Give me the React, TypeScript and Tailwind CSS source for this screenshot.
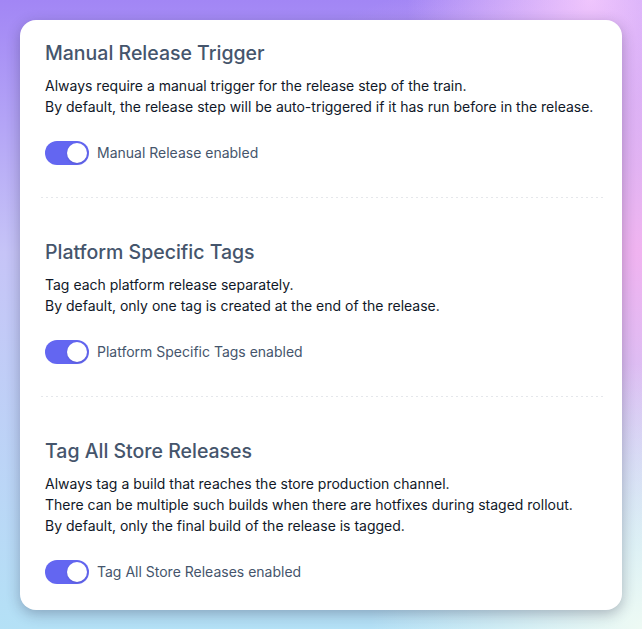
import { useState } from 'react';

type Setting = {
  id: string;
  title: string;
  lines: string[];
  label: string;
};

const SETTINGS: Setting[] = [
  {
    id: 'manual',
    title: 'Manual Release Trigger',
    lines: [
      'Always require a manual trigger for the release step of the train.',
      'By default, the release step will be auto-triggered if it has run before in the release.',
    ],
    label: 'Manual Release enabled',
  },
  {
    id: 'platform',
    title: 'Platform Specific Tags',
    lines: ['Tag each platform release separately.', 'By default, only one tag is created at the end of the release.'],
    label: 'Platform Specific Tags enabled',
  },
  {
    id: 'store',
    title: 'Tag All Store Releases',
    lines: [
      'Always tag a build that reaches the store production channel.',
      'There can be multiple such builds when there are hotfixes during staged rollout.',
      'By default, only the final build of the release is tagged.',
    ],
    label: 'Tag All Store Releases enabled',
  },
];

function Toggle({ on, onChange }: { on: boolean; onChange: () => void }) {
  return (
    <button
      type="button"
      onClick={onChange}
      className={`relative inline-flex h-6 w-11 shrink-0 rounded-full border-2 border-transparent transition-colors ${
        on ? 'bg-[#6366f1]' : 'bg-gray-200'
      }`}
    >
      <span
        className={`inline-block h-5 w-5 rounded-full bg-white shadow transition-transform ${
          on ? 'translate-x-5' : 'translate-x-0'
        }`}
      />
    </button>
  );
}

export default function App() {
  const [enabled, setEnabled] = useState<Record<string, boolean>>({ manual: true, platform: true, store: true });

  return (
    <div className="min-h-screen w-full p-5 font-['Inter',sans-serif] bg-[radial-gradient(ellipse_at_100%_100%,#eefaf4_0%,transparent_30%),radial-gradient(ellipse_at_100%_40%,#f0b3f0_0%,transparent_55%),radial-gradient(ellipse_at_92%_0%,#efc8ff_0%,transparent_22%),linear-gradient(to_bottom,#a286f5_0%,#c6c4f7_40%,#b4e1f6_100%)]">
      <div className="rounded-2xl bg-white px-[25px] pt-[19px] pb-[26px] shadow-[0_4px_14px_rgba(30,30,60,0.3)]">
        {SETTINGS.map((s, i) => (
          <div key={s.id}>
            {i > 0 && (
              <div className="ml-[-4px] mr-[-9px] h-px bg-[repeating-linear-gradient(to_right,#e5e7eb_0_2px,transparent_2px_5px)]" />
            )}
            <div className={`${i > 0 ? 'pt-10' : ''} ${i < SETTINGS.length - 1 ? 'pb-8' : ''}`}>
              <h2 className="text-[19.5px] leading-7 font-medium text-slate-600">{s.title}</h2>
              <div className="mt-2 text-sm leading-[21px] text-gray-900">
                {s.lines.map((l) => (
                  <p key={l}>{l}</p>
                ))}
              </div>
              <div className="mt-6 flex items-center gap-2">
                <Toggle
                  on={enabled[s.id]}
                  onChange={() => setEnabled((p) => ({ ...p, [s.id]: !p[s.id] }))}
                />
                <span className="text-sm text-slate-600">{s.label}</span>
              </div>
            </div>
          </div>
        ))}
      </div>
    </div>
  );
}
